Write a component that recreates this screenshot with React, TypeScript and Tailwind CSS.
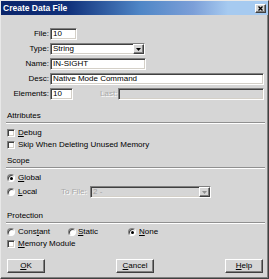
import React from 'react';

const sunken =
  'border-t border-l border-[#808080] border-b border-r border-b-white border-r-white shadow-[inset_1px_1px_0_#404040,inset_-1px_-1px_0_#d4d0c8]';
const raised =
  'border-t border-l border-white border-b border-r border-b-[#404040] border-r-[#404040] shadow-[inset_-1px_-1px_0_#808080]';

function TextBox({ value, w, disabled }: { value?: string; w: string; disabled?: boolean }) {
  return (
    <div
      className={`${w} h-[12px] ${sunken} ${disabled ? 'bg-[#d6d6d6]' : 'bg-white'} flex items-center pl-[2px] text-black`}
    >
      {value}
    </div>
  );
}

function Arrow({ disabled }: { disabled?: boolean }) {
  return (
    <div className={`w-[11px] h-full ${raised} bg-[#d6d6d6] flex items-center justify-center`}>
      <svg width="5" height="3" viewBox="0 0 5 3">
        <polygon points="0,0 5,0 2.5,3" fill={disabled ? '#909090' : '#000'} />
      </svg>
    </div>
  );
}

function Select({ value, w, disabled }: { value: string; w: string; disabled?: boolean }) {
  return (
    <div className={`${w} h-[12px] ${sunken} ${disabled ? 'bg-[#d6d6d6] text-[#a0a0a0]' : 'bg-white text-black'} flex items-center`}>
      <span className="flex-1 pl-[2px]">{value}</span>
      <Arrow disabled={disabled} />
    </div>
  );
}

function Check({ label }: { label: React.ReactNode }) {
  return (
    <div className="flex items-center h-[10px] pl-[6px]">
      <div className={`w-[8px] h-[8px] bg-white ${sunken}`} />
      <span className="ml-[3px] whitespace-nowrap">{label}</span>
    </div>
  );
}

function Radio({ checked }: { checked?: boolean }) {
  return (
    <div className="w-[8px] h-[8px] shrink-0 rounded-full bg-white border border-[#808080] border-b-white border-r-white shadow-[inset_1px_1px_0_#404040] flex items-center justify-center">
      {checked && <div className="w-[3px] h-[3px] rounded-full bg-black" />}
    </div>
  );
}

function Header({ title, className }: { title: string; className: string }) {
  return (
    <div className={className}>
      <div className="h-[10px] flex items-center pl-[6px]">{title}</div>
      <div className="mt-[1px] ml-[5px] mr-[3px] h-[2px] border-t border-[#909090] border-b border-b-white" />
    </div>
  );
}

function Button({ children }: { children: React.ReactNode }) {
  return (
    <div className={`w-[38px] h-[14px] ${raised} bg-[#d6d6d6] flex items-center justify-center`}>{children}</div>
  );
}

export default function App() {
  const row = 'flex items-center h-[12px]';
  const label = 'w-[48px] text-right mr-[1px]';
  const grey = 'text-[#a8a8a8] [text-shadow:1px_1px_0_#fff] whitespace-nowrap';
  return (
    <div
      className="w-[269px] h-[279px] bg-[#d6d6d6] border border-[#e8e8e8] border-r-[#404040] border-b-[#404040] shadow-[inset_-1px_-1px_0_#808080] flex flex-col text-[8px] leading-none text-black"
      style={{ fontFamily: '"Liberation Sans", Arial, sans-serif' }}
    >
      {/* title bar */}
      <div className="h-[14px] flex items-center justify-between pl-[2px] pr-[2px] bg-[linear-gradient(to_right,#0a246a_0%,#10307a_25%,#4f86c6_52%,#7c9fd8_72%,#a6caf0_85%,#a6caf0_100%)]">
        <span className="text-white font-bold text-[8.5px]">Create Data File</span>
        <div className={`w-[11px] h-[9px] ${raised} bg-[#d6d6d6] flex items-center justify-center`}>
          <svg width="5" height="5" viewBox="0 0 5 5">
            <path d="M0.5 0.5 L4.5 4.5 M4.5 0.5 L0.5 4.5" stroke="#000" strokeWidth="1.3" />
          </svg>
        </div>
      </div>

      <div className="flex flex-col gap-[3px] mt-[13px]">
        <div className={row}>
          <span className={label}>File:</span>
          <TextBox value="10" w="w-[27px]" />
        </div>
        <div className={row}>
          <span className={label}>Type:</span>
          <Select value="String" w="w-[95px]" />
        </div>
        <div className={row}>
          <span className={label}>Name:</span>
          <TextBox value="IN-SIGHT" w="w-[96px]" />
        </div>
        <div className={row}>
          <span className={label}>Desc:</span>
          <TextBox value="Native Mode Command" w="w-[214px]" />
        </div>
        <div className={row}>
          <span className={label}>Elements:</span>
          <TextBox value="10" w="w-[23px]" />
          <span className={`ml-[27px] w-[18px] ${grey}`}>Last:</span>
          <TextBox w="w-[146px]" disabled />
        </div>
      </div>

      <Header title="Attributes" className="mt-[11px]" />
      <div className="mt-[4px] flex flex-col gap-[2px]">
        <Check label={<><u>D</u>ebug</>} />
        <Check label="Skip When Deleting Unused Memory" />
      </div>

      <Header title="Scope" className="mt-[6px]" />
      <div className="mt-[4px] flex items-center h-[10px] pl-[6px]">
        <Radio checked />
        <span className="ml-[3px]">
          <u>G</u>lobal
        </span>
      </div>
      <div className="mt-[3px] flex items-center h-[12px] pl-[6px]">
        <Radio />
        <span className="ml-[3px] w-[43px] shrink-0">
          <u>L</u>ocal
        </span>
        <span className={`w-[29px] shrink-0 ${grey}`}>To File:</span>
        <Select value="2 -" w="w-[121px]" disabled />
      </div>

      <Header title="Protection" className="mt-[13px]" />
      <div className="mt-[3px] flex items-center h-[10px] pl-[6px]">
        <Radio />
        <span className="ml-[3px] w-[50px]">
          Cons<u>t</u>ant
        </span>
        <Radio />
        <span className="ml-[2px] w-[50px]">
          <u>S</u>tatic
        </span>
        <Radio checked />
        <span className="ml-[3px]">
          <u>N</u>one
        </span>
      </div>
      <div className="mt-[2px]">
        <Check label={<><u>M</u>emory Module</>} />
      </div>

      <div className="mt-[10px] flex justify-between pl-[6px] pr-[5px]">
        <Button>
          <u>O</u>K
        </Button>
        <Button>
          <u>C</u>ancel
        </Button>
        <Button>
          <u>H</u>elp
        </Button>
      </div>
    </div>
  );
}
